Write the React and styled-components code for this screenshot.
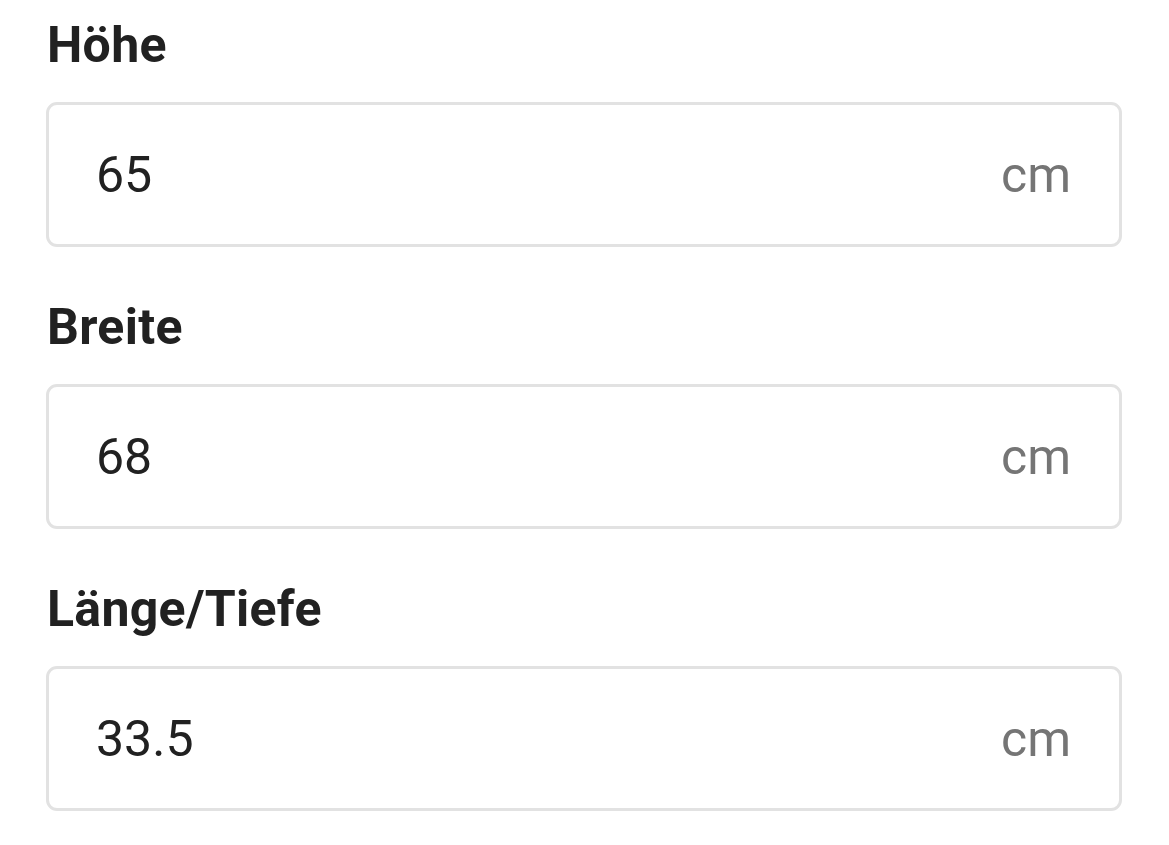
import React from 'react';
import styled, { createGlobalStyle } from 'styled-components';

const GlobalStyle = createGlobalStyle`
  html, body {
    margin: 0;
    padding: 0;
    background: #ffffff;
  }
  body {
    font-family: Roboto, 'Noto Sans', Arial, sans-serif;
    color: #212121;
  }
`;

const Form = styled.div`
  display: flex;
  flex-direction: column;
  gap: 51px;
  padding: 16px 47px 0 46px;
`;

const Field = styled.div`
  display: flex;
  flex-direction: column;
  gap: 28px;
`;

const Label = styled.label`
  font-size: 50px;
  line-height: 58px;
  font-weight: 700;
  letter-spacing: 0.3px;
  color: #212121;
  padding-left: 1px;
`;

const InputBox = styled.div`
  height: 145px;
  box-sizing: border-box;
  display: flex;
  align-items: center;
  justify-content: space-between;
  padding: 0 48px 0 47px;
  border: 3px solid #e2e2e2;
  border-radius: 11px;
  background: #fff;
`;

const Value = styled.span`
  font-size: 50px;
  color: #212121;
`;

const Unit = styled.span`
  font-size: 50px;
  color: #757575;
`;

const fields = [
  { label: 'Höhe', value: '65' },
  { label: 'Breite', value: '68' },
  { label: 'Länge/Tiefe', value: '33.5' },
];

export default function App() {
  return (
    <>
      <GlobalStyle />
      <Form>
        {fields.map((f) => (
          <Field key={f.label}>
            <Label>{f.label}</Label>
            <InputBox>
              <Value>{f.value}</Value>
              <Unit>cm</Unit>
            </InputBox>
          </Field>
        ))}
      </Form>
    </>
  );
}
